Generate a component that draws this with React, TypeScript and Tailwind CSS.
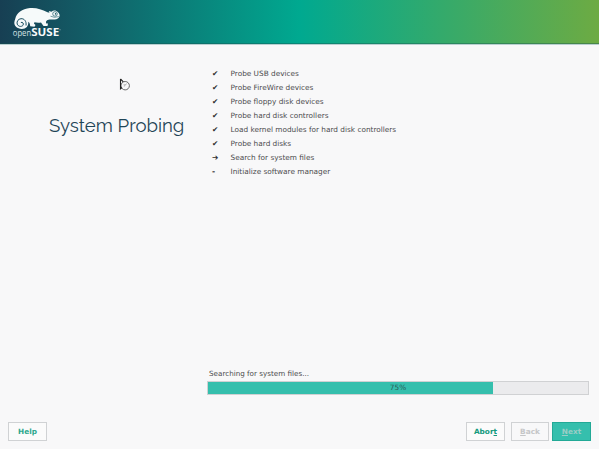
import React from "react";

type Step = { mark: "done" | "active" | "pending"; label: string };

const steps: Step[] = [
  { mark: "done", label: "Probe USB devices" },
  { mark: "done", label: "Probe FireWire devices" },
  { mark: "done", label: "Probe floppy disk devices" },
  { mark: "done", label: "Probe hard disk controllers" },
  { mark: "done", label: "Load kernel modules for hard disk controllers" },
  { mark: "done", label: "Probe hard disks" },
  { mark: "active", label: "Search for system files" },
  { mark: "pending", label: "Initialize software manager" },
];

const glyphs = { done: "✔", active: "➔", pending: "-" };

function Logo() {
  return (
    <svg className="block h-[43px] w-[80px]" viewBox="0 0 80 43">
      <path
        fill="#f6fafa"
        d="M15.200 19C16.600 13.200 22 8.800 30 8.100C36.500 7.600 41.500 9.400 47.500 12.200L49.500 12.800L48.800 10.900L51.500 11.800C53 10.400 54.600 10.200 56.300 10.900C58.600 11.900 59.800 14 59.600 16C59.200 18.300 57 19.300 54.700 19.500C52 19.600 49.500 19.300 47.500 20.100C46 20.900 45.600 21.900 46.300 23.500H48L47.500 26H43.500L41 22.500C38.500 22.900 36 22.700 34.500 22.200L33.900 23.500L35.500 25L34.500 26.700L30.200 26.200C30 23.800 29.700 22.600 28.200 21.700C28.900 25.800 26 28.900 21.800 28.900C17.300 28.900 14.100 26.300 14.300 22.600C14.400 21.200 14.800 20 15.200 19Z"
      />
      <path
        d="M26 25.500C26.700 21.300 24.200 18.400 21 18.700C18.200 19 16.500 21.400 17.200 24C18 26.600 21.400 27.200 23 25.300C24 23.600 22.700 21.700 20.900 22.500"
        fill="none"
        stroke="#194e60"
        strokeWidth="1"
      />
      <circle cx="55" cy="13.900" r="2.300" fill="#f6fafa" stroke="#1a5b68" strokeWidth=".7" />
      <circle cx="55.600" cy="13.900" r=".8" fill="#1a5b68" />
      <path d="M50.500 16.200Q54 18.200 58.900 16.600" fill="none" stroke="#1a5b68" strokeWidth=".6" />
      <text x="12.800" y="35.600" textLength="18.300" lengthAdjust="spacingAndGlyphs" fill="#d5e2e4" fontFamily="Open Sans, sans-serif" fontSize="8.200">open</text>
      <text x="31.200" y="36.200" textLength="28" lengthAdjust="spacingAndGlyphs" fill="#f6fafa" fontFamily="Open Sans, sans-serif" fontWeight="700" fontSize="9.800">SUSE</text>
      <circle cx="60" cy="29.700" r=".5" fill="#bcd0d2" />
    </svg>
  );
}

function BusyCursor() {
  return (
    <svg className="absolute left-[119px] top-[78px] h-[14px] w-[12px]" viewBox="0 0 12 14">
      <circle cx="6.200" cy="7.700" r="4.200" fill="#f8f8f9" stroke="#666" strokeWidth="1" />
      <path d="M1.500 1V10.800L3 9.500M1.500 1L4.300 3.800" fill="none" stroke="#222" strokeWidth="1.100" />
      <path d="M4.500 6.800H6.200L7.800 5.700M5.200 8.600L6.200 6.800" fill="none" stroke="#999" strokeWidth=".7" />
    </svg>
  );
}

export default function App() {
  return (
    <div className="relative flex h-[449px] w-[599px] flex-col overflow-hidden bg-[#f8f8f9] font-['DejaVu_Sans',sans-serif] text-[7.34px] text-[#4b4b4d]">
      <header className="h-[45px] shrink-0 border-b border-[#b9cfd0] bg-[linear-gradient(90deg,#173f53_0%,#126068_16%,#00a990_50%,#6dab43_100%)]">
        <div className="h-11 border-b border-[#17534f]/40">
          <Logo />
        </div>
      </header>

      <main className="flex grow">
        <aside className="w-[207px] shrink-0 pl-[49px] pt-[68px]">
          <h1 className="whitespace-nowrap font-['Raleway','Lato',sans-serif] text-[18.6px] leading-[26px] text-[#1f4557]">
            System Probing
          </h1>
        </aside>
        <section className="flex w-[382px] flex-col pt-[22px]">
          <ul>
            {steps.map((step) => (
              <li key={step.label} className="flex h-[14px] items-center leading-[14px]">
                <span className="w-[23.5px] pl-[5px] text-[7.6px] text-[#303030]">
                  {step.mark === "pending" ? <b>{glyphs[step.mark]}</b> : glyphs[step.mark]}
                </span>
                <span className="whitespace-nowrap">{step.label}</span>
              </li>
            ))}
          </ul>
          <div className="mt-[189px] pl-[2px] text-[7.2px] leading-[12px]">Searching for system files...</div>
          <div className="mt-px h-[14px] border border-[#d0d1d3] bg-[#ebebed]">
            <div className="relative h-full">
              <div className="h-full w-[75%] bg-[#35bfad]" />
              <span className="absolute inset-0 text-center leading-[12px] text-[#2b5b58]">75%</span>
            </div>
          </div>
        </section>
      </main>

      <footer className="flex h-[27px] shrink-0 items-start pl-2 pr-[8px] font-bold">
        <button className="h-[19px] w-[39px] border border-[#d0d2d4] bg-[#fbfbfb] pt-px text-[#2da78c]">Help</button>
        <button className="ml-auto h-[19px] w-[39px] border border-[#d0d2d4] bg-[#fbfbfb] pt-px text-[#149a7d]">
          Abor<u>t</u>
        </button>
        <button className="ml-[6px] h-[19px] w-[38px] border border-[#d0d2d4] bg-[#f8f8f9] pt-px text-[#c5c6c8]">
          <u>B</u>ack
        </button>
        <button className="ml-[3px] h-[19px] w-[39px] border border-[#22a996] bg-[#35bfad] pt-px text-[#9bcdc6]">
          <u>N</u>ext
        </button>
      </footer>

      <BusyCursor />
    </div>
  );
}
